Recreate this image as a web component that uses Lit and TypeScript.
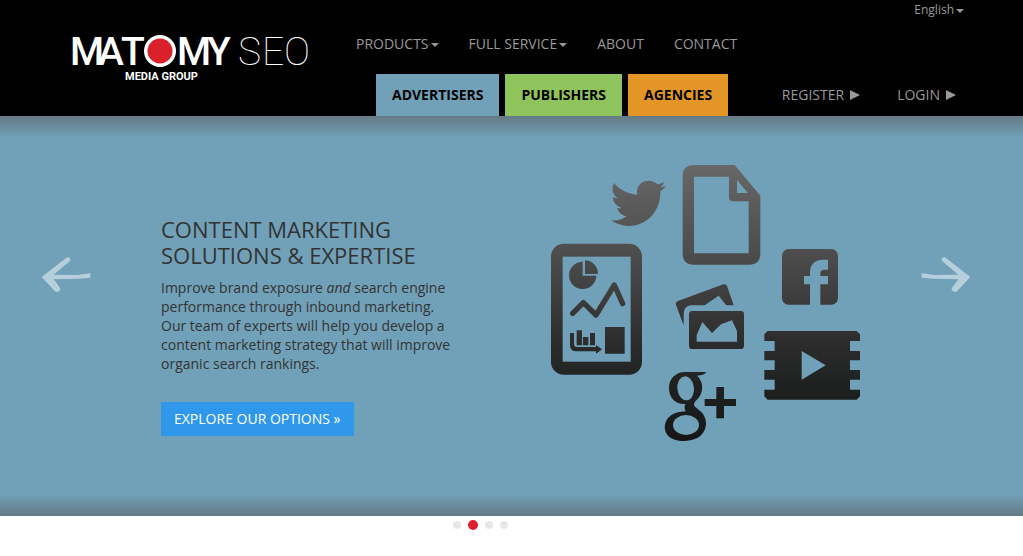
import { LitElement, html, css, svg } from "lit";
import { customElement, state } from "lit/decorators.js";

const artwork = svg`
  <defs>
    <linearGradient id="shade" x1="0" y1="0" x2="0" y2="1">
      <stop offset="0" stop-color="#686868" />
      <stop offset="0.15" stop-color="#5a5a5a" />
      <stop offset="0.35" stop-color="#4a4a4a" />
      <stop offset="0.65" stop-color="#2b2b2b" />
      <stop offset="0.8" stop-color="#1f2121" />
      <stop offset="1" stop-color="#161616" />
    </linearGradient>
    <mask id="shapes" maskUnits="userSpaceOnUse" x="0" y="0" width="990" height="885">
      <g transform="translate(0 240)">
        <rect x="33" y="26" width="273" height="393" rx="38" fill="#fff" />
        <rect x="68" y="65" width="204" height="315" fill="#000" />
        <path d="M128 80V122H169A41 41 0 1 1 128 80Z" fill="#fff" />
        <path d="M135 76A39 41 0 0 1 174 117H135Z" fill="#fff" />
        <path d="M98 235L130 203L168 240L223 150L248 206" fill="none" stroke="#fff" stroke-width="16" stroke-linecap="round" stroke-linejoin="round" />
        <path d="M90 294H102V326Q102 336 112 336H168V330L186 343L168 356V349H110Q90 349 90 329ZM110 286H126V331H110ZM129 306H145V331H129ZM150 294H165V331H150ZM195 276H254V356H195Z" fill="#fff" />
      </g>
      <g transform="translate(180 0)">
        <path d="M32 196C50 198 66 194 80 184C66 182 55 172 51 159C56 160 61 160 65 158C49 154 39 142 39 126C43 128 48 130 53 130C37 118 34 100 42 84C60 105 84 117 112 119C107 96 122 77 146 77C157 77 165 81 172 88C180 86 186 84 193 80C191 88 186 93 181 97C187 96 192 95 198 93C194 99 188 104 181 109C183 164 144 213 87 213C66 213 48 206 32 196Z" fill="#fff" />
        <path d="M282 30H404L481 122V295Q481 329 447 329H282Q248 329 248 295V64Q248 30 282 30Z" fill="#fff" />
        <path d="M282 65H387V126Q387 139 400 139H446V295H282ZM411 75L444 114H411Z" fill="#000" />
      </g>
      <g transform="translate(360 360)">
        <path d="M54 78L190 28Q198 26 201 33L221 91H199L176 62L134 91H91Q71 95 71 116V151L48 90Q46 81 54 78Z" fill="#fff" />
        <rect x="87" y="108" width="165" height="114" rx="10" fill="#fff" />
        <path d="M110 200V180L127 141L156 174L183 148L216 136L231 168V200Z" fill="#000" />
      </g>
      <g transform="translate(345 615)">
        <path d="M90 36H153Q150 46 126 47C146 64 148 98 125 120C116 129 114 135 122 142L139 156C162 180 156 218 127 234C98 248 58 246 40 228C22 209 28 180 48 166C60 158 76 155 92 154Q86 144 91 132C66 134 42 118 42 84C42 54 64 36 90 36Z" fill="#fff" />
        <ellipse cx="92" cy="85" rx="25" ry="36" transform="rotate(-6 92 85)" fill="#000" />
        <ellipse cx="93" cy="195" rx="39" ry="30" fill="#000" />
        <path d="M184 81H207V117H243V138H207V175H184V138H149V117H184Z" fill="#fff" />
      </g>
      <g transform="translate(645 255)">
        <rect x="81" y="27" width="168" height="167" rx="20" fill="#fff" />
        <path d="M165 195V133H147V108H165V98C165 73 180 59 204 59H219V89H207Q196 90 196 99V108H219V133H196V195Z" fill="#000" />
        <path d="M38 273H305L315 283V303H285V333H315V361H285V390H315V419H285V449H315V469L305 479H38L28 469V449H59V419H28V390H59V361H28V333H59V303H28V283Z" fill="#fff" />
        <path d="M140 333L212 376L140 419Z" fill="#000" />
      </g>
    </mask>
  </defs>
  <rect y="30" width="990" height="830" fill="url(#shade)" mask="url(#shapes)" />
`;

@customElement("app-root")
export class AppRoot extends LitElement {
  static styles = css`
    :host {
      display: block;
      min-height: 100vh;
      background: #fff;
      font-family: "Open Sans", sans-serif;
      font-size: 14px;
      line-height: 20px;
      color: #333;
    }
    a {
      color: inherit;
      text-decoration: none;
    }
    button {
      font: inherit;
      color: inherit;
      background: none;
      border: 0;
      padding: 0;
      cursor: pointer;
    }
    header {
      display: flex;
      background: #000;
      color: #999;
      padding: 0 67px 0 66px;
    }
    .logo {
      display: block;
      flex: none;
      margin-top: 30px;
    }
    .logo svg {
      display: block;
    }
    .bars {
      flex: 1;
      display: flex;
      flex-direction: column;
      margin-left: 40px;
    }
    .lang {
      align-self: flex-end;
      font-size: 12px;
      margin-right: -8px;
    }
    .caret {
      display: inline-block;
      border: 4px solid transparent;
      border-top-color: currentColor;
      border-bottom: 0;
      vertical-align: middle;
      margin-left: 2px;
    }
    .nav {
      display: flex;
      gap: 30px;
      padding-top: 14px;
    }
    .row {
      display: flex;
      align-items: center;
      margin-top: 20px;
      padding-left: 20px;
    }
    .tabs {
      display: flex;
      gap: 6px;
    }
    .tab {
      color: #000;
      font-weight: 700;
      padding: 11px 16px;
    }
    .blue { background: #71a1b8; }
    .green { background: #8fc35b; }
    .orange { background: #e39525; }
    .account {
      flex: 1;
      display: flex;
      justify-content: flex-end;
      gap: 37px;
    }
    .account a {
      display: flex;
      align-items: center;
      gap: 6px;
    }
    .hero {
      display: flex;
      align-items: center;
      min-height: 400px;
      padding: 0 52px 0 41px;
      box-sizing: border-box;
      background:
        linear-gradient(rgba(90, 90, 90, 0.55), rgba(90, 90, 90, 0) 22px),
        linear-gradient(to top, rgba(90, 90, 90, 0.55), rgba(90, 90, 90, 0) 22px),
        #71a1b8;
    }
    .arrow {
      flex: none;
      display: block;
      height: 60px;
      margin-bottom: 82px;
    }
    .arrow svg, .art {
      display: block;
    }
    .copy {
      flex: 1;
      padding: 20px 0 0 70px;
    }
    h1 {
      margin: 0 0 10px;
      font-size: 22px;
      line-height: 26px;
      font-weight: 400;
    }
    p {
      margin: 0 0 29px;
      line-height: 19px;
      max-width: 300px;
    }
    .cta {
      display: inline-block;
      background: #2f98ea;
      color: #fff;
      padding: 7px 13px;
    }
    .art {
      flex: none;
      margin: 0 51px 28px 0;
    }
    .dots {
      display: flex;
      justify-content: center;
      align-items: center;
      gap: 7px;
      padding-top: 4px;
      padding-right: 62px;
    }
    .dot {
      width: 8px;
      height: 8px;
      border-radius: 50%;
      background: #e8e7ea;
    }
    .dot.on {
      width: 10px;
      height: 10px;
      background: #da202b;
    }
  `;

  @state() private current = 1;

  private go(step: number) {
    this.current = (this.current + step + 4) % 4;
  }

  private arrow(flip: boolean) {
    return html`<button class="arrow" aria-label=${flip ? "Next" : "Previous"} @click=${() => this.go(flip ? 1 : -1)}>
      <svg width="50" height="60" viewBox="0 0 150 180">
        <g transform=${flip ? "translate(150 0) scale(-1 1)" : ""}>
          <path d="M2 96L76 38Q83 35 87 40Q89 45 86 49L38 89L110 90L148 85V98L110 101L38 103L58 130Q59 136 54 139Q47 143 42 139Z" fill="#b6cfdc" />
        </g>
      </svg>
    </button>`;
  }

  render() {
    return html`
      <header>
        <a class="logo" href="#" aria-label="Matomy SEO Media Group">
          <svg width="250" height="60" viewBox="66 30 250 60" font-family="Roboto, sans-serif" fill="#fff">
            <text y="65" font-size="39" font-weight="500" x="70 98 121 177 207">MATMY</text>
            <circle cx="160" cy="51" r="16" />
            <circle cx="160" cy="51" r="12.5" fill="#da202b" />
            <text y="65" font-size="39" font-weight="100" x="238 262 284">SEO</text>
            <text x="125" y="80" font-size="11" font-weight="700">MEDIA GROUP</text>
          </svg>
        </a>
        <div class="bars">
          <button class="lang">English<span class="caret"></span></button>
          <nav class="nav">
            <a href="#">PRODUCTS<span class="caret"></span></a>
            <a href="#">FULL SERVICE<span class="caret"></span></a>
            <a href="#">ABOUT</a>
            <a href="#">CONTACT</a>
          </nav>
          <div class="row">
            <nav class="tabs">
              <a class="tab blue" href="#">ADVERTISERS</a>
              <a class="tab green" href="#">PUBLISHERS</a>
              <a class="tab orange" href="#">AGENCIES</a>
            </nav>
            <div class="account">
              ${["REGISTER", "LOGIN"].map(
                (label) => html`<a href="#">${label}<svg width="10" height="10"><path d="M0 0L10 5L0 10Z" fill="#999" /></svg></a>`
              )}
            </div>
          </div>
        </div>
      </header>
      <section class="hero">
        ${this.arrow(false)}
        <div class="copy">
          <h1>CONTENT MARKETING<br />SOLUTIONS &amp; EXPERTISE</h1>
          <p>Improve brand exposure <em>and</em> search engine performance through inbound marketing. Our team of experts will help you develop a content marketing strategy that will improve organic search rankings.</p>
          <a class="cta" href="#">EXPLORE OUR OPTIONS »</a>
        </div>
        <svg class="art" width="330" height="295" viewBox="0 0 990 885" aria-hidden="true">${artwork}</svg>
        ${this.arrow(true)}
      </section>
      <div class="dots">
        ${[0, 1, 2, 3].map(
          (i) => html`<button class="dot ${i === this.current ? "on" : ""}" aria-label="Slide ${i + 1}" @click=${() => (this.current = i)}></button>`
        )}
      </div>
    `;
  }
}
